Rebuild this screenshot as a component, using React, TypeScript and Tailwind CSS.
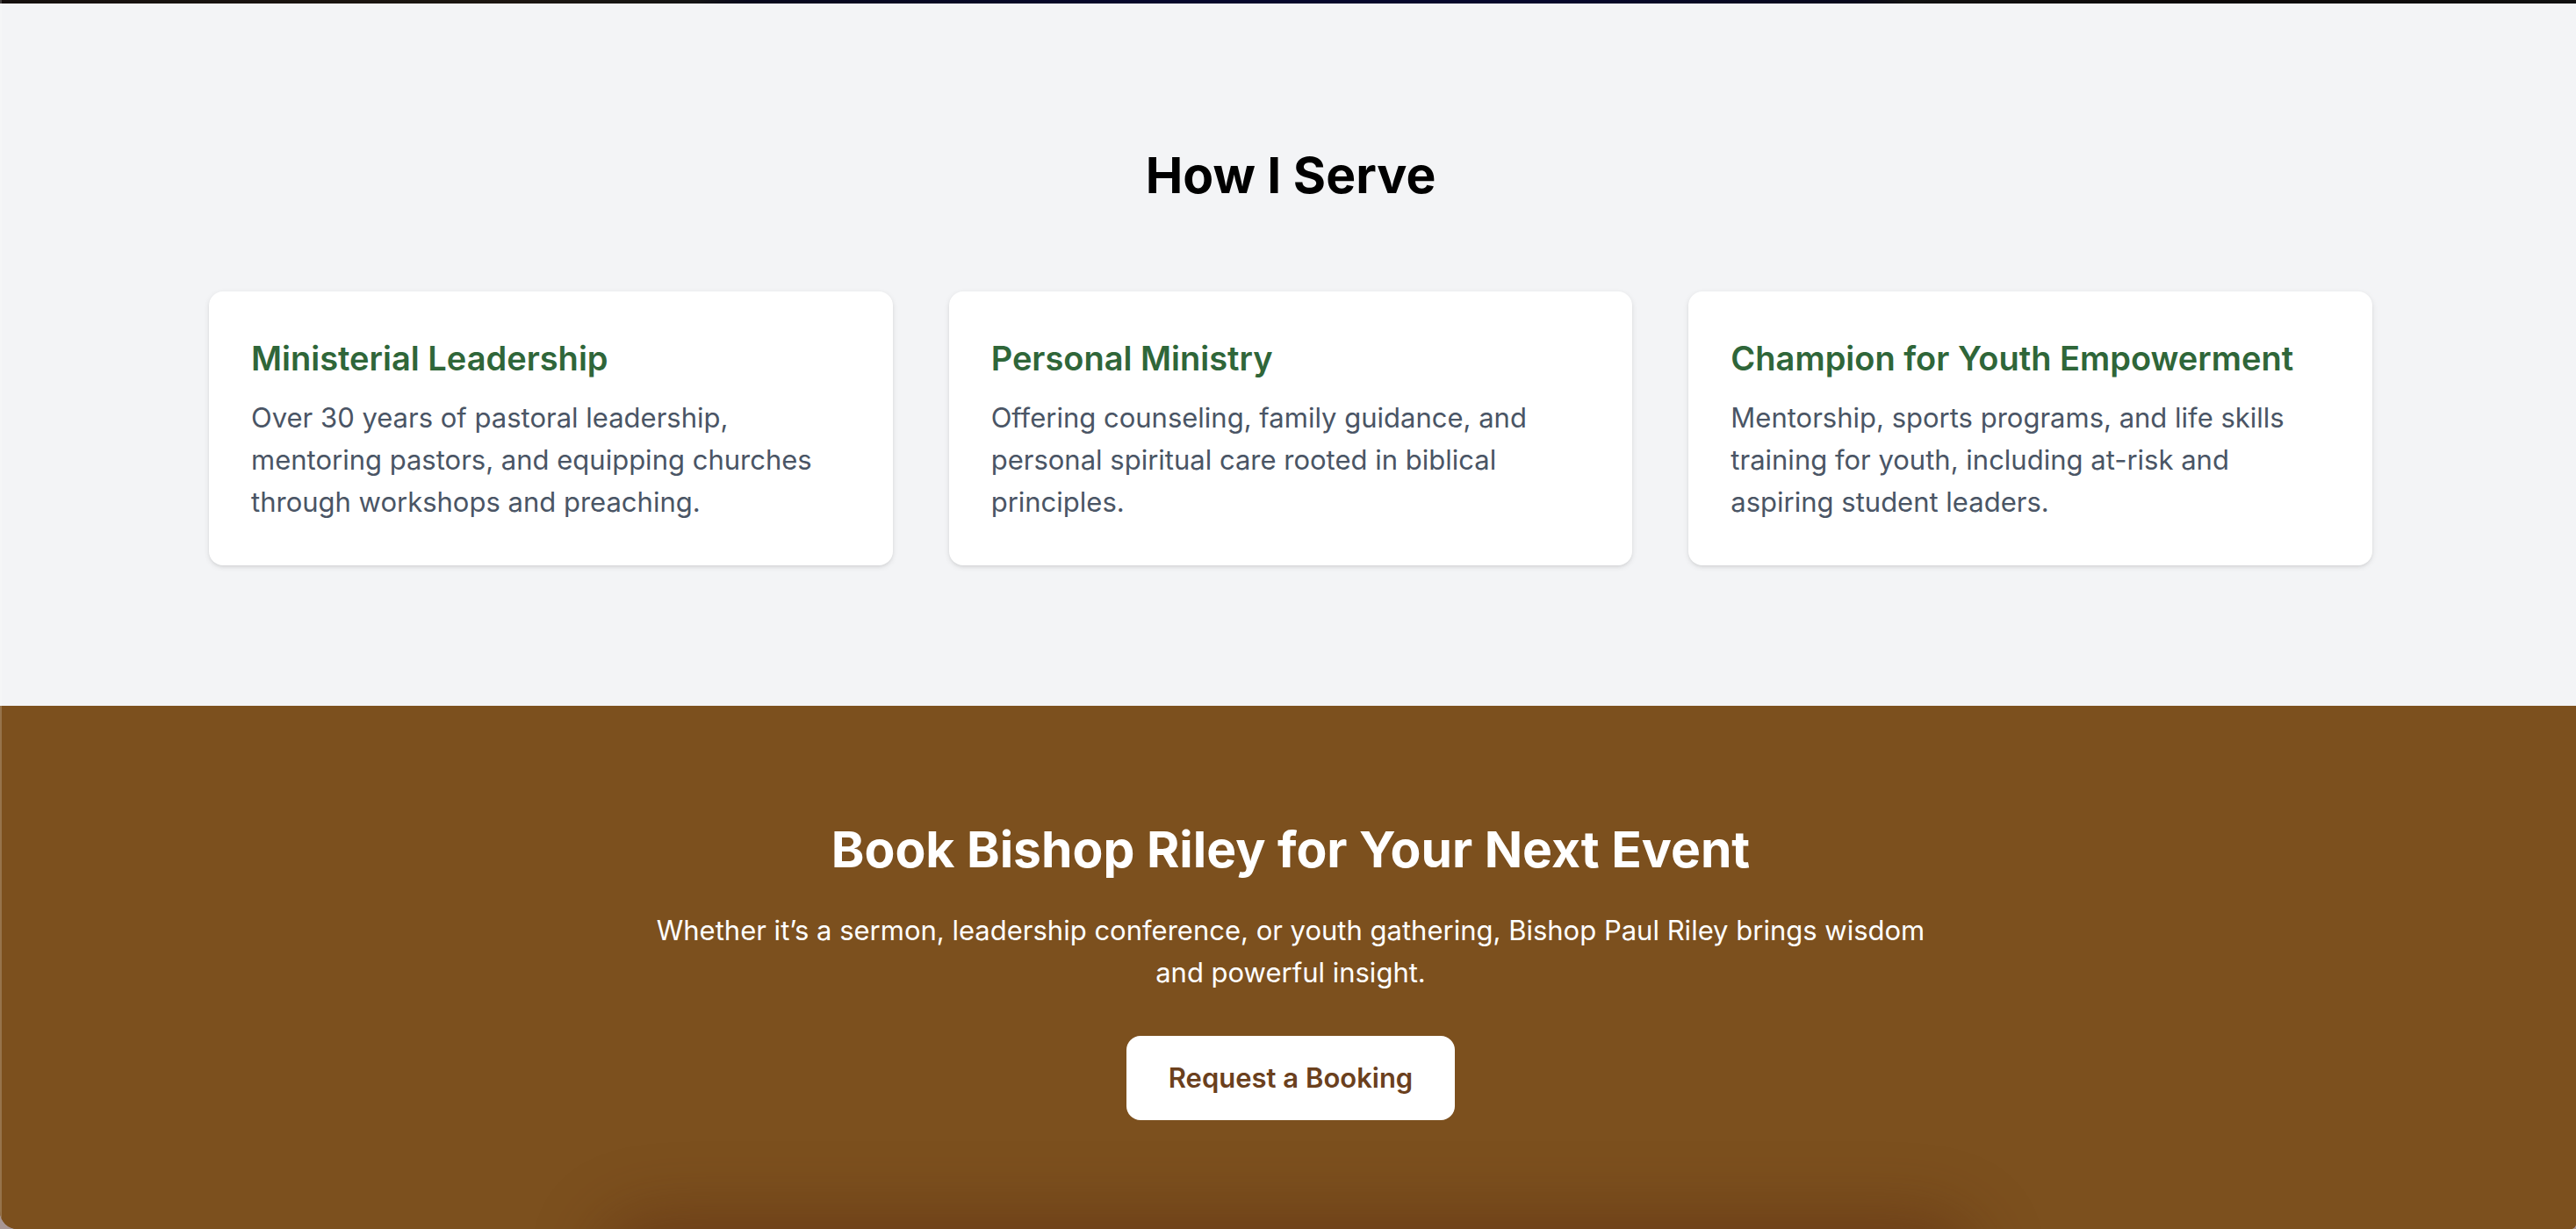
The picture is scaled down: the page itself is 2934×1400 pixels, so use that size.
const services = [
  {
    title: 'Ministerial Leadership',
    body: 'Over 30 years of pastoral leadership, mentoring pastors, and equipping churches through workshops and preaching.',
  },
  {
    title: 'Personal Ministry',
    body: 'Offering counseling, family guidance, and personal spiritual care rooted in biblical principles.',
  },
  {
    title: 'Champion for Youth Empowerment',
    body: 'Mentorship, sports programs, and life skills training for youth, including at-risk and aspiring student leaders.',
  },
];

function Services() {
  return (
    <section className="px-12 py-40">
      <div className="mx-auto max-w-[2464px]">
        <h2 className="mb-24 text-center text-[57px] leading-[72px] font-bold text-black">How I Serve</h2>
        <div className="grid grid-cols-3 gap-16">
          {services.map((s) => (
            <article
              key={s.title}
              className="rounded-2xl bg-white p-12 shadow-[0_2px_6px_rgba(0,0,0,0.1),0_2px_4px_-2px_rgba(0,0,0,0.1)]"
            >
              <h3 className="mb-4 text-[38px] leading-[56px] font-semibold text-[#2f6639]">{s.title}</h3>
              <p className="text-[31px] leading-[48px] text-gray-600">{s.body}</p>
            </article>
          ))}
        </div>
      </div>
    </section>
  );
}

function Booking() {
  return (
    <section className="px-12 py-32 text-center text-white">
      <div className="mx-auto max-w-[1472px]">
        <h2 className="mb-8 text-[57px] leading-[72px] font-bold">Book Bishop Riley for Your Next Event</h2>
        <p className="mb-12 text-[31px] leading-[48px]">
          Whether it’s a sermon, leadership conference, or youth gathering, Bishop Paul Riley brings wisdom and
          powerful insight.
        </p>
        <a
          href="#booking"
          className="inline-block rounded-2xl bg-white px-12 py-6 text-[31px] leading-[48px] font-semibold text-[#6b401d]"
        >
          Request a Booking
        </a>
      </div>
    </section>
  );
}

export default function App() {
  return (
    <div className="h-screen bg-[#a89694]">
      <div className="relative h-full overflow-hidden rounded-br-md rounded-bl-[20px] bg-[#7c501e] font-['Inter',sans-serif]">
        <div className="h-1 bg-[linear-gradient(90deg,#15100e,#1c1611_20%,#141414_27%,#07071c_29%,#06082c_45%,#06082c_60%,#07071c_72%,#121212_74%,#0c0808_85%,#101010)]" />
        <main>
          <div className="bg-gray-100 pl-1.5">
            <Services />
          </div>
          <div className="bg-[#7c501e] pl-1.5">
            <Booking />
          </div>
        </main>
        <div className="pointer-events-none absolute inset-x-[24%] top-full h-20 rounded-full shadow-[0_8px_80px_20px_rgba(84,36,16,0.45)]" />
        <div className="pointer-events-none absolute inset-y-0 left-0 w-0.5 bg-white/20" />
      </div>
    </div>
  );
}
